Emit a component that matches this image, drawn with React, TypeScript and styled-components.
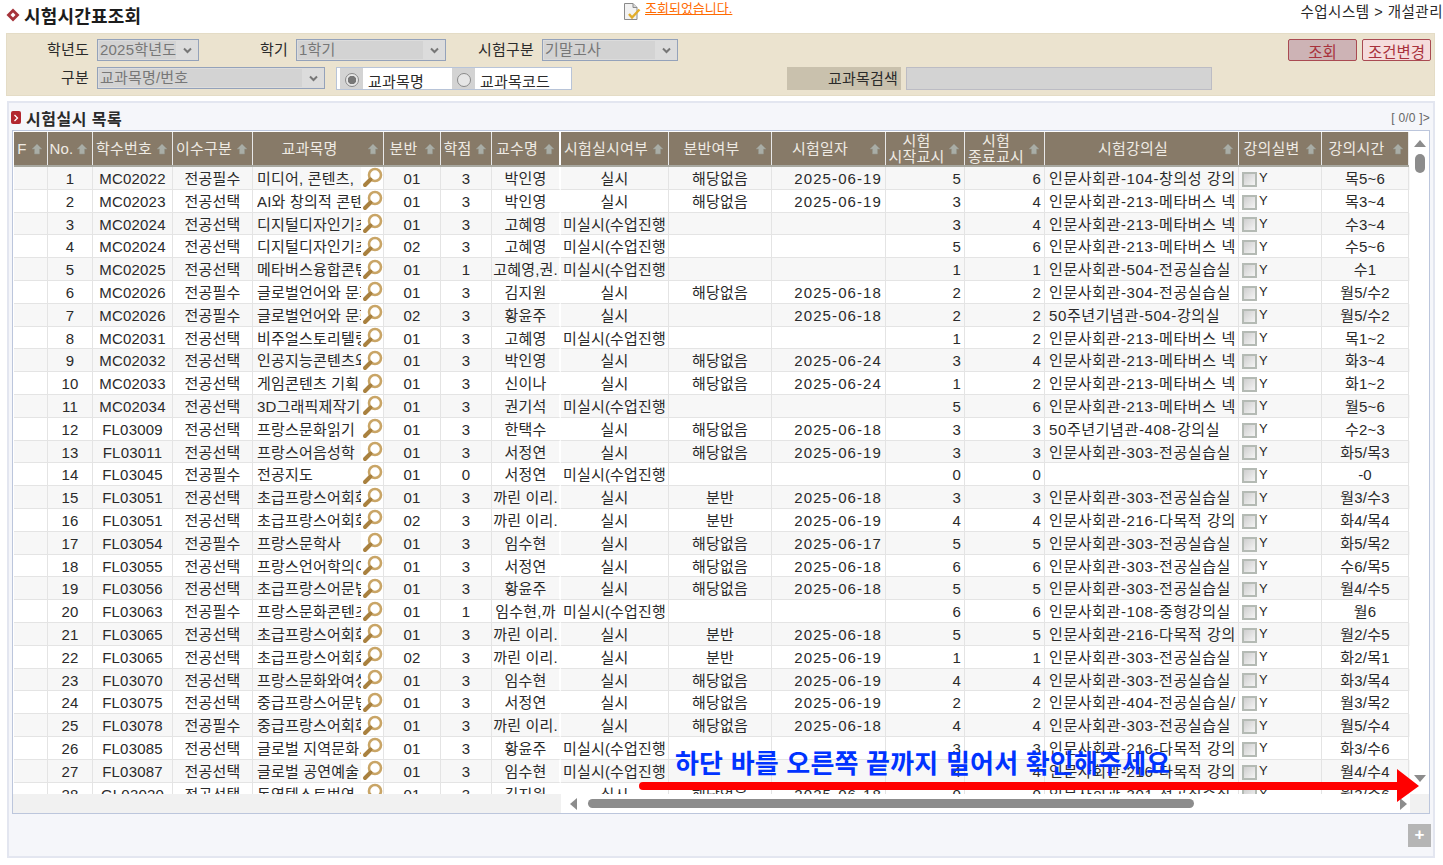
import styled, { createGlobalStyle } from 'styled-components';

var FONT = '"Liberation Sans", "Noto Sans CJK KR", sans-serif';
var COLUMNS = '34px 45px 80px 80px 131px 57px 51px 69px 108px 103px 114px 79px 80px 194px 83px 87px';

var R104 = '인문사회관-104-창의성 강의';
var R213 = '인문사회관-213-메타버스 넥';
var R303 = '인문사회관-303-전공실습실';
var R216 = '인문사회관-216-다목적 강의';
var NOT = '미실시(수업진행';

// no, code, type, name, ban, credit, prof, exam, split, date, start, end, room, time
var rows: string[][] = [
	['1', 'MC02022', '전공필수', '미디어, 콘텐츠,', '01', '3', '박인영', '실시', '해당없음', '2025-06-19', '5', '6', R104, '목5~6'],
	['2', 'MC02023', '전공선택', 'AI와 창의적 콘텐츠', '01', '3', '박인영', '실시', '해당없음', '2025-06-19', '3', '4', R213, '목3~4'],
	['3', 'MC02024', '전공선택', '디지털디자인기초', '01', '3', '고혜영', NOT, '', '', '3', '4', R213, '수3~4'],
	['4', 'MC02024', '전공선택', '디지털디자인기초', '02', '3', '고혜영', NOT, '', '', '5', '6', R213, '수5~6'],
	['5', 'MC02025', '전공선택', '메타버스융합콘텐츠', '01', '1', '고혜영,권.', NOT, '', '', '1', '1', '인문사회관-504-전공실습실', '수1'],
	['6', 'MC02026', '전공필수', '글로벌언어와 문화', '01', '3', '김지원', '실시', '해당없음', '2025-06-18', '2', '2', '인문사회관-304-전공실습실', '월5/수2'],
	['7', 'MC02026', '전공필수', '글로벌언어와 문화', '02', '3', '황윤주', '실시', '', '2025-06-18', '2', '2', '50주년기념관-504-강의실', '월5/수2'],
	['8', 'MC02031', '전공선택', '비주얼스토리텔링', '01', '3', '고혜영', NOT, '', '', '1', '2', R213, '목1~2'],
	['9', 'MC02032', '전공선택', '인공지능콘텐츠와', '01', '3', '박인영', '실시', '해당없음', '2025-06-24', '3', '4', R213, '화3~4'],
	['10', 'MC02033', '전공선택', '게임콘텐츠 기획', '01', '3', '신이나', '실시', '해당없음', '2025-06-24', '1', '2', R213, '화1~2'],
	['11', 'MC02034', '전공선택', '3D그래픽제작기..', '01', '3', '권기석', NOT, '', '', '5', '6', R213, '월5~6'],
	['12', 'FL03009', '전공선택', '프랑스문화읽기', '01', '3', '한택수', '실시', '해당없음', '2025-06-18', '3', '3', '50주년기념관-408-강의실', '수2~3'],
	['13', 'FL03011', '전공선택', '프랑스어음성학', '01', '3', '서정연', '실시', '해당없음', '2025-06-19', '3', '3', R303, '화5/목3'],
	['14', 'FL03045', '전공필수', '전공지도', '01', '0', '서정연', NOT, '', '', '0', '0', '', '-0'],
	['15', 'FL03051', '전공선택', '초급프랑스어회화', '01', '3', '까린 이리.', '실시', '분반', '2025-06-18', '3', '3', R303, '월3/수3'],
	['16', 'FL03051', '전공선택', '초급프랑스어회화', '02', '3', '까린 이리.', '실시', '분반', '2025-06-19', '4', '4', R216, '화4/목4'],
	['17', 'FL03054', '전공필수', '프랑스문학사', '01', '3', '임수현', '실시', '해당없음', '2025-06-17', '5', '5', R303, '화5/목2'],
	['18', 'FL03055', '전공선택', '프랑스언어학의이해', '01', '3', '서정연', '실시', '해당없음', '2025-06-18', '6', '6', R303, '수6/목5'],
	['19', 'FL03056', '전공선택', '초급프랑스어문법', '01', '3', '황윤주', '실시', '해당없음', '2025-06-18', '5', '5', R303, '월4/수5'],
	['20', 'FL03063', '전공필수', '프랑스문화콘텐츠', '01', '1', '임수현,까', NOT, '', '', '6', '6', '인문사회관-108-중형강의실', '월6'],
	['21', 'FL03065', '전공선택', '초급프랑스어회화', '01', '3', '까린 이리.', '실시', '분반', '2025-06-18', '5', '5', R216, '월2/수5'],
	['22', 'FL03065', '전공선택', '초급프랑스어회화', '02', '3', '까린 이리.', '실시', '분반', '2025-06-19', '1', '1', R303, '화2/목1'],
	['23', 'FL03070', '전공선택', '프랑스문화와여성', '01', '3', '임수현', '실시', '해당없음', '2025-06-19', '4', '4', R303, '화3/목4'],
	['24', 'FL03075', '전공선택', '중급프랑스어문법', '01', '3', '서정연', '실시', '해당없음', '2025-06-19', '2', '2', '인문사회관-404-전공실습실/', '월3/목2'],
	['25', 'FL03078', '전공필수', '중급프랑스어회화', '01', '3', '까린 이리.', '실시', '해당없음', '2025-06-18', '4', '4', R303, '월5/수4'],
	['26', 'FL03085', '전공선택', '글로벌 지역문화.', '01', '3', '황윤주', NOT, '', '', '3', '3', R216, '화3/수6'],
	['27', 'FL03087', '전공선택', '글로벌 공연예술', '01', '3', '임수현', NOT, '', '', '4', '4', R216, '월4/수4'],
	['28', 'GL03020', '전공선택', '동영텍스트번역', '01', '3', '김지원', '실시', '해당없음', '2025-06-18', '0', '0', '인문사회관-301-전공실습실', '월3/수6'],
];

var headers = [
	['F'], ['No.'], ['학수번호'], ['이수구분'], ['교과목명'], ['분반'], ['학점'], ['교수명'], ['시험실시여부'], ['분반여부'],
	['시험일자'], ['시험', '시작교시'], ['시험', '종료교시'], ['시험강의실'], ['강의실변'], ['강의시간'],
];

var SortIcon = () => (
	<svg width='14' height='14' viewBox='0 0 14 14'>
		<path d='M7 2 L12 7 H9.5 V12 H4.5 V7 H2 Z' fill='#a9ada6' stroke='#96968c' strokeWidth='0.6' />
	</svg>
);

var Magnifier = () => (
	<svg width='21' height='21' viewBox='0 0 21 21'>
		<circle cx='13' cy='8' r='6' fill='#fff' stroke='#c9a566' strokeWidth='2.6' />
		<path d='M8.5 12.5 L3 18' stroke='#a9813f' strokeWidth='4' strokeLinecap='round' />
	</svg>
);

var DocIcon = () => (
	<svg width='18' height='19' viewBox='0 0 18 19'>
		<path d='M1.5 1.5 H10 L14 5.5 V17.5 H1.5 Z' fill='#f2f2f2' stroke='#8a8a8a' />
		<path d='M10 1.5 V5.5 H14' fill='#d8d8d8' stroke='#8a8a8a' />
		<path d='M6 12 L9 15.5 L16.5 7.5' fill='none' stroke='#e2ad2a' strokeWidth='2.4' />
	</svg>
);

var Chevron = () => (
	<svg width='9' height='7' viewBox='0 0 9 7'>
		<path d='M1 1.5 L4.5 5 L8 1.5' fill='none' stroke='#777' strokeWidth='2' />
	</svg>
);

var Dropdown = ({ width, children }: { width: number; children: string }) => (
	<SelectBox $width={width}>
		<SelectText>{children}</SelectText>
		<SelectArrow>
			<Chevron />
		</SelectArrow>
	</SelectBox>
);

var App = () => {
	return (
		<Page>
			<GlobalStyle />
			<TopBar>
				<Title>
					<svg width='14' height='14' viewBox='0 0 14 14'>
						<path d='M7 0.5 L13.5 7 L7 13.5 L0.5 7 Z' fill='#a5333a' />
						<path d='M7 4.5 L9.5 7 L7 9.5 L4.5 7 Z' fill='#fff' />
					</svg>
					<h1>시험시간표조회</h1>
				</Title>
				<Message>
					<DocIcon />
					<a>조회되었습니다.</a>
				</Message>
				<Crumb>수업시스템 &gt; 개설관리</Crumb>
			</TopBar>

			<Filter>
				<FilterRow>
					<FieldLabel $width={83}>학년도</FieldLabel>
					<Dropdown width={102}>2025학년도</Dropdown>
					<FieldLabel $width={89}>학기</FieldLabel>
					<Dropdown width={150}>1학기</Dropdown>
					<FieldLabel $width={88}>시험구분</FieldLabel>
					<Dropdown width={136}>기말고사</Dropdown>
					<Buttons>
						<ActionButton>조회</ActionButton>
						<ActionButton $light>조건변경</ActionButton>
					</Buttons>
				</FilterRow>
				<FilterRow>
					<FieldLabel $width={83}>구분</FieldLabel>
					<Dropdown width={228}>교과목명/번호</Dropdown>
					<RadioGroup>
						<RadioItem>
							<RadioCell>
								<RadioDot $checked />
							</RadioCell>
							<RadioLabel>교과목명</RadioLabel>
						</RadioItem>
						<RadioItem>
							<RadioCell>
								<RadioDot />
							</RadioCell>
							<RadioLabel>교과목코드</RadioLabel>
						</RadioItem>
					</RadioGroup>
					<SearchLabel>교과목검색</SearchLabel>
					<SearchInput />
				</FilterRow>
			</Filter>

			<Panel>
				<SectionHead>
					<SectionTitle>
						<SectionMark>
							<svg width='6' height='8' viewBox='0 0 6 8'>
								<path d='M1.5 1 L4.5 4 L1.5 7' fill='none' stroke='#fff' strokeWidth='1.3' />
							</svg>
						</SectionMark>
						<h2>시험실시 목록</h2>
					</SectionTitle>
					<Paging>[ 0/0 ]&gt;</Paging>
				</SectionHead>

				<GridBox>
					<GridMain>
						<HeadRow>
							{headers.map((lines, i) => (
								<HeadCell key={i}>
									<HeadText>
										{lines.map((line) => (
											<span key={line}>{line}</span>
										))}
									</HeadText>
									<SortIcon />
								</HeadCell>
							))}
						</HeadRow>
						<GridBody>
							{rows.map((row, i) => (
								<BodyRow key={i} $odd={i % 2 === 0}>
									<Cell />
									<Cell $align='center'>{row[0]}</Cell>
									<Cell $align='center'>{row[1]}</Cell>
									<Cell $align='center'>{row[2]}</Cell>
									<NameCell>
										<NameText>{row[3]}</NameText>
										<LensSlot>
											<Magnifier />
										</LensSlot>
									</NameCell>
									<Cell $align='center'>{row[4]}</Cell>
									<Cell $align='center'>{row[5]}</Cell>
									<Cell $align='center'>{row[6]}</Cell>
									<Cell $align='center'>{row[7]}</Cell>
									<Cell $align='center'>{row[8]}</Cell>
									<Cell $align='right' $spacing={1.1}>
										{row[9]}
									</Cell>
									<Cell $align='right'>{row[10]}</Cell>
									<Cell $align='right'>{row[11]}</Cell>
									<Cell $spacing={0.6}>{row[12]}</Cell>
									<CheckCell>
										<CheckBox />Y
									</CheckCell>
									<Cell $align='center'>{row[13]}</Cell>
								</BodyRow>
							))}
						</GridBody>
					</GridMain>

					<VScroll>
						<Triangle $dir='up' />
						<VThumb />
						<Triangle $dir='down' />
					</VScroll>

					<HScroll>
						<HFrozen />
						<HTrack>
							<Triangle $dir='left' />
							<HThumb />
							<Triangle $dir='right' />
						</HTrack>
					</HScroll>
					<Corner />
				</GridBox>

				<PanelFoot>
					<PlusButton>+</PlusButton>
				</PanelFoot>
			</Panel>

			<Notice>하단 바를 오른쪽 끝까지 밀어서 확인해주세요</Notice>
			<NoticeArrow width='780' height='34' viewBox='0 0 780 34'>
				<path d='M4 13 H758 V0 L780 17 L758 33 V21 H4 A4 4 0 0 1 4 13 Z' fill='#ff0000' />
			</NoticeArrow>
		</Page>
	);
};
export default App;

var GlobalStyle = createGlobalStyle`
	html, body {
		margin: 0;
		background: #fff;
		overflow: hidden;
	}
	* {
		box-sizing: border-box;
	}
`;

var Page = styled.div`
	position: relative;
	width: 1443px;
	height: 865px;
	font-family: ${FONT};
	font-size: 15px;
	letter-spacing: 0.2px;
	color: #2a2a2a;
	overflow: hidden;
`;

var TopBar = styled.div`
	display: flex;
	align-items: flex-start;
	height: 33px;
	padding-left: 6px;
`;

var Title = styled.div`
	display: flex;
	align-items: center;
	gap: 4px;
	width: 617px;
	height: 30px;

	h1 {
		margin: 0;
		font-size: 18px;
		font-weight: 700;
		color: #1c1c1c;
	}
`;

var Message = styled.div`
	display: flex;
	align-items: flex-start;
	gap: 4px;
	margin-top: 2px;

	a {
		font-size: 13px;
		line-height: 13px;
		letter-spacing: 0;
		color: #ff6a00;
		text-decoration: underline;
	}
`;

var Crumb = styled.div`
	margin-left: auto;
	font-size: 14.5px;
	letter-spacing: 0.5px;
	white-space: nowrap;
`;

var Filter = styled.div`
	display: flex;
	flex-direction: column;
	gap: 6px;
	width: 1429px;
	height: 63px;
	margin-left: 6px;
	padding-top: 5px;
	background: #ebe3cf;
	border: 1px solid #e4dcc6;
`;

var FilterRow = styled.div`
	display: flex;
	align-items: flex-start;
	margin-left: -1px;
`;

var FieldLabel = styled.label<{ $width: number }>`
	flex: none;
	width: ${(props) => props.$width}px;
	margin-right: 8px;
	line-height: 21px;
	text-align: right;
	white-space: nowrap;
`;

var SelectBox = styled.div<{ $width: number }>`
	flex: none;
	display: flex;
	width: ${(props) => props.$width}px;
	height: 22px;
	background: #dcdcdc;
	border: 1px solid #94a2ba;
`;

var SelectText = styled.div`
	flex: 1;
	margin: 1px 0 1px 1px;
	padding-left: 1px;
	line-height: 18px;
	color: #777;
	background: #d3d3d3;
	overflow: hidden;
	white-space: nowrap;
`;

var SelectArrow = styled.div`
	flex: none;
	display: flex;
	align-items: center;
	justify-content: center;
	width: 22px;
`;

var Buttons = styled.div`
	display: flex;
	gap: 5px;
	margin-left: auto;
	margin-right: 3px;
`;

var ActionButton = styled.button<{ $light?: boolean }>`
	width: 69px;
	height: 22px;
	padding: 0 0 2px;
	font-family: inherit;
	font-size: 15.5px;
	color: #a8323c;
	background: ${(props) => (props.$light ? '#f5dcdc' : '#cdb3b5')};
	border: 1px solid #a94a52;
	border-radius: 2px;
`;

var RadioGroup = styled.div`
	flex: none;
	display: flex;
	width: 236px;
	height: 23px;
	margin-left: 11px;
	padding-left: 3px;
	background: #fff;
	border: 1px solid #b8c4d8;
	overflow: hidden;
`;

var RadioItem = styled.div`
	display: flex;
	width: 112px;
	gap: 5px;
`;

var RadioCell = styled.div`
	display: flex;
	align-items: center;
	justify-content: center;
	width: 23px;
	height: 23px;
	background: #d3d3d3;
`;

var RadioDot = styled.span<{ $checked?: boolean }>`
	width: 14px;
	height: 14px;
	border-radius: 50%;
	border: 1px solid #8a8a8a;
	background: ${(props) => (props.$checked ? 'radial-gradient(circle, #777 0 4px, #e6e6e6 4.5px)' : '#e6e6e6')};
`;

var RadioLabel = styled.span`
	padding-top: 4px;
	line-height: 20px;
	white-space: nowrap;
`;

var SearchLabel = styled.div`
	flex: none;
	width: 114px;
	height: 23px;
	margin-left: 215px;
	padding-right: 3px;
	line-height: 23px;
	text-align: right;
	background: #c9c1ad;
`;

var SearchInput = styled.div`
	flex: none;
	width: 306px;
	height: 23px;
	margin-left: 5px;
	background: #d3d3d3;
	border: 1px solid #bcbcc4;
`;

var Panel = styled.div`
	display: flex;
	flex-direction: column;
	width: 1428px;
	height: 757px;
	margin: 5px 0 0 7px;
	background: #f5f6fa;
	border: 2px solid #e3e6f0;
	padding: 0 3px 0 3px;
`;

var SectionHead = styled.div`
	display: flex;
	align-items: center;
	justify-content: space-between;
	height: 27px;
	padding-top: 2px;
`;

var SectionTitle = styled.div`
	display: flex;
	align-items: center;
	gap: 5px;

	h2 {
		margin: 0;
		font-size: 16px;
		font-weight: 700;
		letter-spacing: 0.5px;
	}
`;

var SectionMark = styled.span`
	display: flex;
	align-items: center;
	justify-content: center;
	width: 10px;
	height: 13px;
	margin-left: -1px;
	background: #b2262e;
	border-radius: 2px;
`;

var Paging = styled.span`
	font-size: 12px;
	color: #666;
`;

var GridBox = styled.div`
	display: grid;
	grid-template-columns: 1397px 19px;
	grid-template-rows: 663px 19px;
	width: 1418px;
	height: 684px;
	background: #fff;
	border: 1px solid #bcc6dc;
`;

var GridMain = styled.div`
	display: flex;
	flex-direction: column;
	min-height: 0;
	overflow: hidden;
`;

var HeadRow = styled.div`
	flex: none;
	display: grid;
	grid-template-columns: ${COLUMNS};
	height: 35px;
	margin: 1px 1px 0;
	border-bottom: 2px solid #a8a8a0;
`;

var HeadCell = styled.div`
	display: flex;
	align-items: center;
	padding-right: 3px;
	color: #efebe4;
	background: #877a68;
	border-right: 1px solid #e8e8e8;

	&:nth-child(8) {
		border-right: 2px solid #fff;
	}
`;

var HeadText = styled.div`
	flex: 1;
	display: flex;
	flex-direction: column;
	align-items: center;
	min-width: 0;
	line-height: 16px;
	white-space: nowrap;
`;

var GridBody = styled.div`
	flex: 1;
	min-height: 0;
	margin-left: 1px;
	overflow: hidden;
`;

var BodyRow = styled.div<{ $odd: boolean }>`
	display: grid;
	grid-template-columns: ${COLUMNS};
	height: 22.8px;
	background: ${(props) => (props.$odd ? '#f7f7f7' : '#fff')};
`;

var Cell = styled.div<{ $align?: string; $spacing?: number }>`
	min-width: 0;
	padding: 0 ${(props) => (props.$align === 'right' ? '3px' : '0')} 0 ${(props) => (props.$align ? '0' : '4px')};
	line-height: 23px;
	letter-spacing: ${(props) => props.$spacing ?? 0.2}px;
	text-align: ${(props) => props.$align || 'left'};
	white-space: nowrap;
	overflow: hidden;
	border-right: 1px solid #e4e4e4;
	border-bottom: 1px solid #e4e4e4;

	&:nth-child(8) {
		border-right: 2px solid #fff;
	}
`;

var NameCell = styled.div`
	display: flex;
	min-width: 0;
	padding-left: 4px;
	overflow: hidden;
	border-right: 1px solid #e4e4e4;
	border-bottom: 1px solid #e4e4e4;
`;

var NameText = styled.span`
	flex: 1;
	min-width: 0;
	line-height: 23px;
	white-space: nowrap;
	overflow: hidden;
`;

var LensSlot = styled.span`
	flex: none;
	display: flex;
	align-items: center;
	justify-content: flex-end;
	width: 22px;
	background: #fff;
`;

var CheckCell = styled.div`
	display: flex;
	align-items: center;
	gap: 2px;
	padding-left: 3px;
	font-size: 13px;
	border-right: 1px solid #e4e4e4;
	border-bottom: 1px solid #e4e4e4;
`;

var CheckBox = styled.span`
	width: 15px;
	height: 15px;
	margin-top: 3px;
	border: 2px solid #b4bab4;
	background: linear-gradient(135deg, #cfcfcf, #f4f4f4);
`;

var VScroll = styled.div`
	display: flex;
	flex-direction: column;
	align-items: center;
	padding: 9px 0 12px;
	background: #fff;
`;

var VThumb = styled.div`
	width: 10px;
	height: 19px;
	margin-top: 7px;
	margin-bottom: auto;
	background: #8c8c8c;
	border-radius: 5px;
`;

var Triangle = styled.span<{ $dir: 'up' | 'down' | 'left' | 'right' }>`
	flex: none;
	width: 0;
	height: 0;
	border-style: solid;
	border-color: transparent;
	${(props) => props.$dir === 'up' && 'border-width: 0 6px 7px; border-bottom-color: #8c8c8c;'}
	${(props) => props.$dir === 'down' && 'border-width: 7px 6px 0; border-top-color: #8c8c8c;'}
	${(props) => props.$dir === 'left' && 'border-width: 6px 7px 6px 0; border-right-color: #8c8c8c;'}
	${(props) => props.$dir === 'right' && 'border-width: 6px 0 6px 7px; border-left-color: #8c8c8c;'}
`;

var HScroll = styled.div`
	display: grid;
	grid-template-columns: 548px 1fr;
	height: 19px;
`;

var HFrozen = styled.div`
	background: #f1f1f1;
`;

var HTrack = styled.div`
	display: flex;
	align-items: center;
	padding: 0 3px 0 9px;
	background: #fff;
`;

var HThumb = styled.div`
	width: 606px;
	height: 9px;
	margin-left: 11px;
	margin-right: auto;
	background: #8c8c8c;
	border-radius: 5px;
`;

var Corner = styled.div`
	background: #f1f1f1;
`;

var PanelFoot = styled.div`
	display: flex;
	justify-content: flex-end;
	padding-top: 10px;
	margin-right: -1px;
`;

var PlusButton = styled.div`
	width: 23px;
	height: 23px;
	line-height: 22px;
	text-align: center;
	font-size: 17px;
	font-weight: 700;
	color: #fff;
	background: #b5b5b5;
`;

var Notice = styled.div`
	position: absolute;
	left: 675px;
	top: 747px;
	font-size: 26px;
	font-weight: 700;
	line-height: 34px;
	color: #0033ff;
	white-space: nowrap;
`;

var NoticeArrow = styled.svg`
	position: absolute;
	left: 639px;
	top: 769px;
`;
